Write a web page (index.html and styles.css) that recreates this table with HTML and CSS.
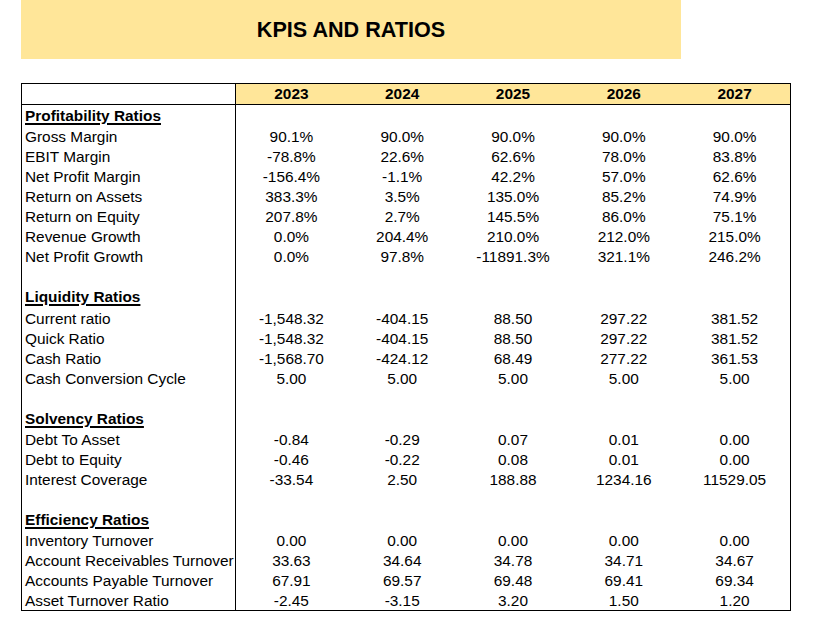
FILE: index.html
```html
<!DOCTYPE html>
<html lang="en">
<head>
<meta charset="utf-8">
<title>KPIs and Ratios</title>
<link rel="stylesheet" href="styles.css">
</head>
<body>
<div class="banner"><h1 class="title">KPIS AND RATIOS</h1></div>
<div class="sheet">
  <div class="row head"><div class="lbl"></div><div class="yr">2023</div><div class="yr">2024</div><div class="yr">2025</div><div class="yr">2026</div><div class="yr">2027</div></div>

  <div class="row sec"><div class="lbl"><span>Profitability Ratios</span></div><div></div><div></div><div></div><div></div><div></div></div>
  <div class="row"><div class="lbl">Gross Margin</div><div>90.1%</div><div>90.0%</div><div>90.0%</div><div>90.0%</div><div>90.0%</div></div>
  <div class="row"><div class="lbl">EBIT Margin</div><div>-78.8%</div><div>22.6%</div><div>62.6%</div><div>78.0%</div><div>83.8%</div></div>
  <div class="row"><div class="lbl">Net Profit Margin</div><div>-156.4%</div><div>-1.1%</div><div>42.2%</div><div>57.0%</div><div>62.6%</div></div>
  <div class="row"><div class="lbl">Return on Assets</div><div>383.3%</div><div>3.5%</div><div>135.0%</div><div>85.2%</div><div>74.9%</div></div>
  <div class="row"><div class="lbl">Return on Equity</div><div>207.8%</div><div>2.7%</div><div>145.5%</div><div>86.0%</div><div>75.1%</div></div>
  <div class="row"><div class="lbl">Revenue Growth</div><div>0.0%</div><div>204.4%</div><div>210.0%</div><div>212.0%</div><div>215.0%</div></div>
  <div class="row"><div class="lbl">Net Profit Growth</div><div>0.0%</div><div>97.8%</div><div>-11891.3%</div><div>321.1%</div><div>246.2%</div></div>
  <div class="row"><div class="lbl"></div><div></div><div></div><div></div><div></div><div></div></div>

  <div class="row sec"><div class="lbl"><span>Liquidity Ratios</span></div><div></div><div></div><div></div><div></div><div></div></div>
  <div class="row"><div class="lbl">Current ratio</div><div>-1,548.32</div><div>-404.15</div><div>88.50</div><div>297.22</div><div>381.52</div></div>
  <div class="row"><div class="lbl">Quick Ratio</div><div>-1,548.32</div><div>-404.15</div><div>88.50</div><div>297.22</div><div>381.52</div></div>
  <div class="row"><div class="lbl">Cash Ratio</div><div>-1,568.70</div><div>-424.12</div><div>68.49</div><div>277.22</div><div>361.53</div></div>
  <div class="row"><div class="lbl">Cash Conversion Cycle</div><div>5.00</div><div>5.00</div><div>5.00</div><div>5.00</div><div>5.00</div></div>
  <div class="row"><div class="lbl"></div><div></div><div></div><div></div><div></div><div></div></div>

  <div class="row sec"><div class="lbl"><span>Solvency Ratios</span></div><div></div><div></div><div></div><div></div><div></div></div>
  <div class="row"><div class="lbl">Debt To Asset</div><div>-0.84</div><div>-0.29</div><div>0.07</div><div>0.01</div><div>0.00</div></div>
  <div class="row"><div class="lbl">Debt to Equity</div><div>-0.46</div><div>-0.22</div><div>0.08</div><div>0.01</div><div>0.00</div></div>
  <div class="row"><div class="lbl">Interest Coverage</div><div>-33.54</div><div>2.50</div><div>188.88</div><div>1234.16</div><div>11529.05</div></div>
  <div class="row"><div class="lbl"></div><div></div><div></div><div></div><div></div><div></div></div>

  <div class="row sec"><div class="lbl"><span>Efficiency Ratios</span></div><div></div><div></div><div></div><div></div><div></div></div>
  <div class="row"><div class="lbl">Inventory Turnover</div><div>0.00</div><div>0.00</div><div>0.00</div><div>0.00</div><div>0.00</div></div>
  <div class="row"><div class="lbl">Account Receivables Turnover</div><div>33.63</div><div>34.64</div><div>34.78</div><div>34.71</div><div>34.67</div></div>
  <div class="row"><div class="lbl">Accounts Payable Turnover</div><div>67.91</div><div>69.57</div><div>69.48</div><div>69.41</div><div>69.34</div></div>
  <div class="row"><div class="lbl">Asset Turnover Ratio</div><div>-2.45</div><div>-3.15</div><div>3.20</div><div>1.50</div><div>1.20</div></div>
</div>
</body>
</html>
```
FILE: styles.css
```css
html, body {
  margin: 0;
  padding: 0;
  background: #ffffff;
}
body {
  font-family: "Liberation Sans", Arial, sans-serif;
  color: #000000;
}
.banner {
  margin-left: 21px;
  width: 660px;
  height: 59px;
  background: #ffe699;
  display: flex;
  align-items: center;
  justify-content: center;
}
.title {
  margin: 0;
  font-size: 21.6px;
  font-weight: bold;
  line-height: 1;
}
.sheet {
  margin: 24px 0 0 21px;
  width: 768px;
  border: 1px solid #000;
  display: grid;
  grid-template-columns: 214px repeat(5, 1fr);
  font-size: 15.4px;
}
.row {
  display: contents;
}
.row > div {
  height: 20px;
  line-height: 21px;
  text-align: center;
  white-space: nowrap;
  overflow: hidden;
}
.row > .lbl {
  text-align: left;
  padding-left: 3px;
  border-right: 1px solid #000;
  box-sizing: border-box;
}
.head > div {
  height: 21px;
  line-height: 20px;
  border-bottom: 1px solid #000;
  box-sizing: border-box;
}
.head > .yr {
  background: #ffe699;
  font-weight: bold;
}
.sec > div {
  height: 21.25px;
  line-height: 21px;
}
.sec span {
  font-weight: bold;
  text-decoration: underline;
  text-decoration-thickness: 2px;
  text-underline-offset: 2px;
}
```
